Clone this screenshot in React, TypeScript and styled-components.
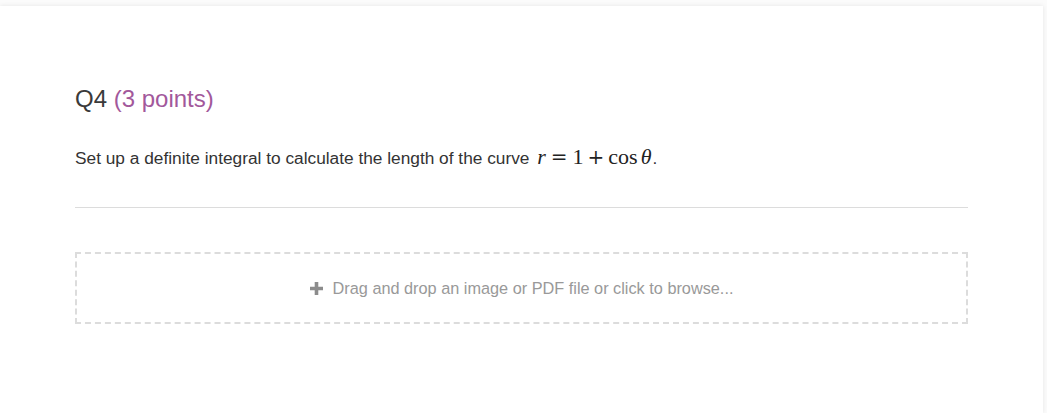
import React from "react";
import styled, { createGlobalStyle } from "styled-components";

const Global = createGlobalStyle`
  html, body { margin: 0; padding: 0; background: #fbfbfb; }
  body { font-family: "Liberation Sans", Arial, sans-serif; overflow: hidden; }
`;

const Page = styled.div`
  padding-top: 6px;
  height: 413px;
  box-sizing: border-box;
`;

const Card = styled.section`
  width: 1043px;
  min-height: 407px;
  box-sizing: border-box;
  background: #fff;
  box-shadow: 0 0 5px rgba(0, 0, 0, 0.09);
  padding: 80px 75px 40px 75px;
`;

const Heading = styled.h2`
  margin: 0;
  font-size: 24px;
  line-height: 26px;
  font-weight: 400;
  color: #3a3a3a;
`;

const Points = styled.span`
  color: #a2589b;
`;

const Prompt = styled.p`
  margin: 33px 0 0 0;
  font-size: 17.3px;
  line-height: 26px;
  color: #333;
`;

const MathRun = styled.span`
  font-family: "Liberation Serif", "Times New Roman", serif;
  font-size: 22px;
  line-height: 1;
  color: #222;
  margin-left: 3px;
  margin-right: 1px;
`;

const Var = styled.i<{ $lead?: number }>`
  font-style: italic;
  margin-left: ${(p) => p.$lead ?? 0}px;
`;

const Op = styled.span<{ $space: number }>`
  font-family: "DejaVu Serif", serif;
  font-size: 20px;
  margin: 0 ${(p) => p.$space}px;
`;

const Divider = styled.hr`
  border: 0;
  border-top: 1px solid #dcdcdc;
  margin: 36px 0 0 0;
`;

const DropZone = styled.div`
  margin-top: 44px;
  height: 72px;
  box-sizing: border-box;
  border: 2px dashed #dcdcdc;
  display: flex;
  align-items: center;
  justify-content: center;
  gap: 10px;
  color: #999;
  font-size: 16.3px;
  cursor: pointer;
`;

const PlusIcon = styled.svg`
  width: 13px;
  height: 13px;
  flex: none;
  margin-top: 1px;
`;

export default function App() {
  return (
    <>
      <Global />
      <Page>
        <Card>
          <Heading>
            Q4 <Points>(3 points)</Points>
          </Heading>
          <Prompt>
            Set up a definite integral to calculate the length of the curve{" "}
            <MathRun>
              <Var>r</Var>
              <Op $space={5}>=</Op>1<Op $space={4}>+</Op>cos
              <Var $lead={3}>θ</Var>
            </MathRun>
            .
          </Prompt>
          <Divider />
          <DropZone>
            <PlusIcon viewBox="0 0 13 13">
              <path d="M4.7 0h3.6v4.7H13v3.6H8.3V13H4.7V8.3H0V4.7h4.7z" fill="#8c8c8c" />
            </PlusIcon>
            <span>Drag and drop an image or PDF file or click to browse...</span>
          </DropZone>
        </Card>
      </Page>
    </>
  );
}
